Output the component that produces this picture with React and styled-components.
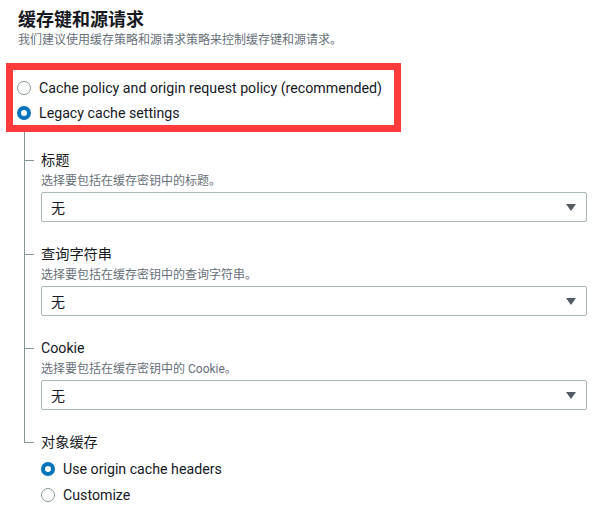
import React from 'react';
import styled, { createGlobalStyle } from 'styled-components';

const GlobalStyle = createGlobalStyle`
  body {
    margin: 0;
    background: #ffffff;
    font-family: Roboto, "Noto Sans CJK SC", sans-serif;
    color: #16191f;
  }
`;

const groups = [
  { label: '标题', desc: '选择要包括在缓存密钥中的标题。' },
  { label: '查询字符串', desc: '选择要包括在缓存密钥中的查询字符串。' },
  { label: 'Cookie', desc: '选择要包括在缓存密钥中的 Cookie。' },
];

const Radio = ({ checked, children }) => (
  <RadioRow>
    <RadioDot checked={checked} />
    <RadioText>{children}</RadioText>
  </RadioRow>
);

const App = () => {
  return (
    <Wrapper>
      <GlobalStyle />
      <Header>
        <Title>缓存键和源请求</Title>
        <Subtitle>我们建议使用缓存策略和源请求策略来控制缓存键和源请求。</Subtitle>
      </Header>
      <Highlight>
        <Radio>Cache policy and origin request policy (recommended)</Radio>
        <Radio checked>Legacy cache settings</Radio>
      </Highlight>
      <Tree>
        {groups.map((g) => (
          <Node key={g.label}>
            <Label>{g.label}</Label>
            <Desc>{g.desc}</Desc>
            <Select>
              <span>无</span>
              <Caret />
            </Select>
          </Node>
        ))}
        <Node last>
          <Label>对象缓存</Label>
          <SubRadios>
            <Radio checked>Use origin cache headers</Radio>
            <Radio>Customize</Radio>
          </SubRadios>
        </Node>
      </Tree>
    </Wrapper>
  );
};

const Wrapper = styled.div`
  padding: 5px 11px 0 6px;
`;

const Header = styled.div`
  padding-left: 12px;
`;

const Title = styled.h2`
  margin: 0;
  font-size: 18px;
  line-height: 26px;
  font-weight: 700;
  font-family: "Noto Sans CJK SC", sans-serif;
`;

const Subtitle = styled.p`
  margin: 0;
  font-size: 12px;
  line-height: 16px;
  color: #687078;
  font-family: "Noto Sans CJK SC", sans-serif;
`;

const Highlight = styled.div`
  box-sizing: border-box;
  width: 395px;
  margin-top: 16px;
  border: 7px solid #ff3b3b;
  padding: 5px 0 0 4px;
`;

const RadioRow = styled.div`
  display: flex;
  align-items: center;
  height: 25px;
  gap: 8px;
`;

const RadioDot = styled.span`
  box-sizing: border-box;
  width: 14px;
  height: 14px;
  border-radius: 50%;
  flex-shrink: 0;
  background: #ffffff;
  border: ${(p) => (p.checked ? '4px solid #0073bb' : '1px solid #879596')};
`;

const RadioText = styled.span`
  font-size: 14.2px;
  line-height: 20px;
`;

const Tree = styled.div`
  margin-left: 18px;
  padding-top: 18px;
  display: flex;
  flex-direction: column;
  gap: 22px;
`;

const Node = styled.div`
  position: relative;
  padding-left: 17px;

  &::before {
    content: '';
    position: absolute;
    left: 0;
    top: -22px;
    height: ${(p) => (p.last ? '32px' : 'calc(100% + 22px)')};
    border-left: 1px solid #879596;
  }

  &::after {
    content: '';
    position: absolute;
    left: 0;
    top: 10px;
    width: 10px;
    border-top: 1px solid #879596;
  }

  &:first-child::before {
    top: -18px;
    height: calc(100% + 18px);
  }
`;

const Label = styled.div`
  font-size: 14.2px;
  line-height: 20px;
`;

const Desc = styled.div`
  margin-top: 2px;
  font-size: 12px;
  line-height: 18px;
  color: #687078;
`;

const Select = styled.div`
  box-sizing: border-box;
  margin-top: 2px;
  height: 30px;
  display: flex;
  align-items: center;
  justify-content: space-between;
  padding: 0 10px 0 9px;
  border: 1px solid #aab7b8;
  border-radius: 2px;
  font-size: 14px;
`;

const Caret = styled.span`
  width: 0;
  height: 0;
  border-left: 5px solid transparent;
  border-right: 5px solid transparent;
  border-top: 7px solid #545b64;
`;

const SubRadios = styled.div`
  margin-top: 4px;

  & > div {
    height: 26px;
  }
`;

export default App;
